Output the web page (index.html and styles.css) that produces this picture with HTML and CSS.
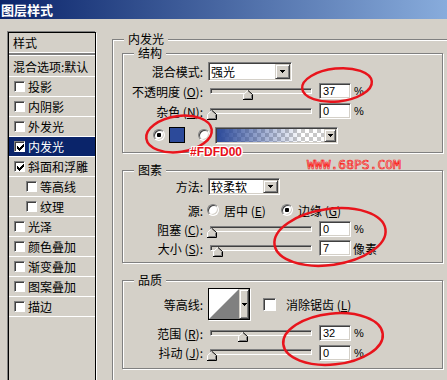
FILE: index.html
```html
<!DOCTYPE html>
<html>
<head>
<meta charset="utf-8">
<link rel="stylesheet" href="styles.css">
</head>
<body>
<div class="titlebar">图层样式</div>
<div class="main">
  <div class="list">
    <div class="list-head">样式</div>
    <div class="list-div"></div>
    <div class="item blend">混合选项:默认</div>
    <div class="item"><span class="cb"></span>投影</div>
    <div class="item"><span class="cb"></span>内阴影</div>
    <div class="item"><span class="cb"></span>外发光</div>
    <div class="item sel"><span class="cb"><svg width="7" height="7" viewBox="0 0 7 7"><path d="M0 2h1v3h-1z M1 3h1v3h-1z M2 4h1v3h-1z M3 3h1v3h-1z M4 2h1v3h-1z M5 1h1v3h-1z M6 0h1v3h-1z" fill="#000"/></svg></span>内发光</div>
    <div class="item"><span class="cb"><svg width="7" height="7" viewBox="0 0 7 7"><path d="M0 2h1v3h-1z M1 3h1v3h-1z M2 4h1v3h-1z M3 3h1v3h-1z M4 2h1v3h-1z M5 1h1v3h-1z M6 0h1v3h-1z" fill="#000"/></svg></span>斜面和浮雕</div>
    <div class="item sub"><span class="cb"></span>等高线</div>
    <div class="item sub"><span class="cb"></span>纹理</div>
    <div class="item"><span class="cb"></span>光泽</div>
    <div class="item"><span class="cb"></span>颜色叠加</div>
    <div class="item"><span class="cb"></span>渐变叠加</div>
    <div class="item"><span class="cb"></span>图案叠加</div>
    <div class="item"><span class="cb"></span>描边</div>
  </div>

  <div class="panel">
    <fieldset class="grp outer">
      <legend>内发光</legend>

      <fieldset class="grp inner g1">
        <legend>结构</legend>
        <div class="row r-blend">
          <span class="lbl">混合模式:</span>
          <div class="dd dd1"><span class="dd-text">强光</span><span class="dd-btn"><svg width="5" height="3" viewBox="0 0 5 3"><path d="M0 0h5v1h-5z M1 1h3v1h-3z M2 2h1v1h-1z" fill="#000"/></svg></span></div>
        </div>
        <div class="row">
          <span class="lbl">不透明度 (<u>O</u>):</span>
          <div class="slider"><div class="track"></div><svg class="thumb" style="left:36px" width="10" height="10" viewBox="0 0 10 10"><path d="M0.5 9.5V4.5L5 0.5L9.5 4.5V9.5Z" fill="#d4d0c8"/><path d="M0.5 9V4.5L4.8 0.6" stroke="#fff" fill="none"/><path d="M5 0.5L9.5 4.5V9.5H0" stroke="#000" fill="none"/><path d="M1.5 8.5H8.5V5" stroke="#808080" fill="none"/></svg></div>
          <div class="num">37</div><span class="unit">%</span>
        </div>
        <div class="row">
          <span class="lbl">杂色 (<u>N</u>):</span>
          <div class="slider"><div class="track"></div><svg class="thumb" style="left:0px" width="10" height="10" viewBox="0 0 10 10"><path d="M0.5 9.5V4.5L5 0.5L9.5 4.5V9.5Z" fill="#d4d0c8"/><path d="M0.5 9V4.5L4.8 0.6" stroke="#fff" fill="none"/><path d="M5 0.5L9.5 4.5V9.5H0" stroke="#000" fill="none"/><path d="M1.5 8.5H8.5V5" stroke="#808080" fill="none"/></svg></div>
          <div class="num">0</div><span class="unit">%</span>
        </div>
        <div class="row r-color">
          <span class="radio on"></span>
          <span class="swatch"></span>
          <span class="radio r2"></span>
          <div class="grad"><span class="grad-fill"></span><span class="dd-btn"><svg width="5" height="3" viewBox="0 0 5 3"><path d="M0 0h5v1h-5z M1 1h3v1h-3z M2 2h1v1h-1z" fill="#000"/></svg></span></div>
        </div>
      </fieldset>

      <fieldset class="grp inner g2">
        <legend>图素</legend>
        <div class="row r-method">
          <span class="lbl">方法:</span>
          <div class="dd dd2"><span class="dd-text">较柔软</span><span class="dd-btn"><svg width="5" height="3" viewBox="0 0 5 3"><path d="M0 0h5v1h-5z M1 1h3v1h-3z M2 2h1v1h-1z" fill="#000"/></svg></span></div>
        </div>
        <div class="row r-src">
          <span class="lbl">源:</span>
          <span class="opt"><span class="radio"></span><span class="opt-text">居中 (<u>E</u>)</span></span>
          <span class="opt"><span class="radio on"></span><span class="opt-text">边缘 (<u>G</u>)</span></span>
        </div>
        <div class="row r-choke">
          <span class="lbl">阻塞 (<u>C</u>):</span>
          <div class="slider"><div class="track"></div><svg class="thumb" style="left:0px" width="10" height="10" viewBox="0 0 10 10"><path d="M0.5 9.5V4.5L5 0.5L9.5 4.5V9.5Z" fill="#d4d0c8"/><path d="M0.5 9V4.5L4.8 0.6" stroke="#fff" fill="none"/><path d="M5 0.5L9.5 4.5V9.5H0" stroke="#000" fill="none"/><path d="M1.5 8.5H8.5V5" stroke="#808080" fill="none"/></svg></div>
          <div class="num">0</div><span class="unit">%</span>
        </div>
        <div class="row">
          <span class="lbl">大小 (<u>S</u>):</span>
          <div class="slider"><div class="track"></div><svg class="thumb" style="left:6px" width="10" height="10" viewBox="0 0 10 10"><path d="M0.5 9.5V4.5L5 0.5L9.5 4.5V9.5Z" fill="#d4d0c8"/><path d="M0.5 9V4.5L4.8 0.6" stroke="#fff" fill="none"/><path d="M5 0.5L9.5 4.5V9.5H0" stroke="#000" fill="none"/><path d="M1.5 8.5H8.5V5" stroke="#808080" fill="none"/></svg></div>
          <div class="num">7</div><span class="unit cjk">像素</span>
        </div>
      </fieldset>

      <fieldset class="grp inner g3">
        <legend>品质</legend>
        <div class="row r-contour">
          <span class="lbl">等高线:</span>
          <div class="contour"><svg class="contour-img" width="30" height="30" viewBox="0 0 30 30"><rect width="30" height="30" fill="#fff"/><path d="M0 30L30 0V30Z" fill="#808080"/></svg><span class="dd-btn"><svg width="5" height="3" viewBox="0 0 5 3"><path d="M0 0h5v1h-5z M1 1h3v1h-3z M2 2h1v1h-1z" fill="#000"/></svg></span></div>
          <span class="cb big"></span>
          <span class="opt-text">消除锯齿 (<u>L</u>)</span>
        </div>
        <div class="row r-range">
          <span class="lbl">范围 (<u>R</u>):</span>
          <div class="slider"><div class="track"></div><svg class="thumb" style="left:31px" width="10" height="10" viewBox="0 0 10 10"><path d="M0.5 9.5V4.5L5 0.5L9.5 4.5V9.5Z" fill="#d4d0c8"/><path d="M0.5 9V4.5L4.8 0.6" stroke="#fff" fill="none"/><path d="M5 0.5L9.5 4.5V9.5H0" stroke="#000" fill="none"/><path d="M1.5 8.5H8.5V5" stroke="#808080" fill="none"/></svg></div>
          <div class="num">32</div><span class="unit">%</span>
        </div>
        <div class="row r-jitter">
          <span class="lbl">抖动 (<u>J</u>):</span>
          <div class="slider"><div class="track"></div><svg class="thumb" style="left:0px" width="10" height="10" viewBox="0 0 10 10"><path d="M0.5 9.5V4.5L5 0.5L9.5 4.5V9.5Z" fill="#d4d0c8"/><path d="M0.5 9V4.5L4.8 0.6" stroke="#fff" fill="none"/><path d="M5 0.5L9.5 4.5V9.5H0" stroke="#000" fill="none"/><path d="M1.5 8.5H8.5V5" stroke="#808080" fill="none"/></svg></div>
          <div class="num">0</div><span class="unit">%</span>
        </div>
      </fieldset>
    </fieldset>
  </div>
</div>

<svg class="marks" width="447" height="380" viewBox="0 0 447 380">
  <ellipse cx="179" cy="134" rx="33" ry="18" transform="rotate(-8 179 134)"/>
  <ellipse cx="337" cy="85" rx="35" ry="16.5" transform="rotate(-6 337 85)"/>
  <ellipse cx="330" cy="237" rx="56" ry="28" transform="rotate(-8 330 237)"/>
  <ellipse cx="333" cy="339" rx="50" ry="25.5" transform="rotate(-6 333 339)"/>
</svg>
<div class="hex">#FDFD00</div>
<div class="wm">WWW.68PS.COM</div>
</body>
</html>
```

FILE: styles.css
```css
* { box-sizing: border-box; }
html, body { margin: 0; padding: 0; }
body {
  width: 447px;
  height: 380px;
  overflow: hidden;
  position: relative;
  background: #d4d0c8;
  font-family: "Noto Sans CJK SC", sans-serif;
  font-size: 12px;
  color: #000;
}
u { text-decoration: underline; }

.titlebar {
  height: 19px;
  line-height: 19px;
  padding-left: 1px;
  color: #fff;
  font-weight: bold;
  font-size: 13px;
  background: linear-gradient(to right, #0a246a, #88acdc);
}

.main {
  display: flex;
  align-items: flex-start;
  padding-top: 13px;
}

/* left style list */
.list {
  flex: none;
  margin-left: 8px;
  width: 88px;
  height: 360px;
  border: 1px solid #000;
  box-shadow: -1px -1px 0 #808080, 1px 1px 0 #fff;
}
.list-head {
  height: 19px;
  line-height: 19px;
  padding-left: 4px;
}
.list-div {
  height: 4px;
  border-top: 1px solid #fff;
  border-bottom: 1px solid #fff;
  background: #808080;
}
.item {
  display: flex;
  align-items: center;
  height: 20px;
  line-height: 19px;
  padding-left: 5px;
  border-bottom: 1px solid #fff;
  white-space: nowrap;
}
.item.blend { height: 21px; padding-left: 4px; }
.item.sub { padding-left: 17px; }
.item.sel { background: #0a246a; color: #fff; }

.cb {
  flex: none;
  display: flex;
  align-items: center;
  justify-content: center;
  width: 11px;
  height: 11px;
  margin-right: 3px;
  background: #fff;
  border: 1px solid;
  border-color: #808080 #fff #fff #808080;
  box-shadow: inset 1px 1px 0 #404040;
}
.cb svg { margin: 1px 0 0 1px; }
.cb.big { width: 13px; height: 13px; margin: 0 5px 0 13px; }

/* right panel */
.panel { flex: none; margin-left: 16px; }

fieldset.grp {
  margin: 0;
  padding: 0;
  min-width: 0;
  border: 1px solid #808080;
  box-shadow: inset 1px 1px 0 #fff, 1px 1px 0 #fff;
}
.grp > legend {
  margin-left: 11px;
  padding: 0 4px;
  line-height: 14px;
  font-size: 12px;
  background: #d4d0c8;
}
.outer {
  width: 360px;
  height: 400px;
  padding-left: 9px !important;
}
.outer > legend { margin-left: 2px; }
.inner { width: 321px; }
.g1 { padding-bottom: 7px !important; }
.g2 { margin-top: 10px !important; padding-bottom: 4px !important; }
.g3 { margin-top: 10px !important; padding-bottom: 6px !important; }

.row {
  display: flex;
  align-items: center;
  height: 20px;
  white-space: nowrap;
}
.r-blend { margin-top: 1px; }
.r-color { margin-top: 4px; padding-left: 30px; }
.r-method { height: 19px; }
.r-src { margin-top: 4px; }
.r-choke { height: 18px; }
.r-contour { height: 32px; margin-top: 1px; }
.r-range { margin-top: 3px; }
.r-jitter { height: 19px; }

.lbl {
  flex: none;
  width: 80px;
  margin-right: 4px;
  text-align: right;
}

/* dropdown */
.dd {
  display: flex;
  margin-left: 1px;
  padding: 1px;
  background: #fff;
  border: 1px solid;
  border-color: #808080 #fff #fff #808080;
  box-shadow: inset 1px 1px 0 #404040, inset -1px -1px 0 #d4d0c8;
}
.dd1 { width: 84px; height: 19px; }
.dd2 { width: 72px; height: 17px; }
.dd-text { flex: 1; padding-left: 1px; line-height: 15px; }
.dd2 .dd-text { line-height: 13px; }
.dd-btn {
  flex: none;
  display: flex;
  align-items: center;
  justify-content: center;
  width: 15px;
  background: #d4d0c8;
  border: 1px solid;
  border-color: #d4d0c8 #404040 #404040 #d4d0c8;
  box-shadow: inset 1px 1px 0 #fff, inset -1px -1px 0 #808080;
}

/* slider */
.slider {
  flex: none;
  position: relative;
  width: 108px;
  height: 12px;
  margin-top: 5px;
}
.track {
  margin-left: 3px;
  width: 102px;
  height: 6px;
  background: #d4d0c8;
  border: 1px solid;
  border-color: #808080 #fff #fff #808080;
  box-shadow: inset 1px 1px 0 #404040;
}
.thumb { position: absolute; top: 2px; }

.num {
  flex: none;
  width: 32px;
  height: 16px;
  margin-left: 4px;
  padding: 1px 0 0 3px;
  background: #fff;
  border: 1px solid;
  border-color: #808080 #fff #fff #808080;
  box-shadow: inset 1px 1px 0 #404040, inset -1px -1px 0 #d4d0c8;
  font-family: "Liberation Sans", Arial, sans-serif;
  font-size: 11px;
  line-height: 12px;
}
.unit {
  margin-left: 3px;
  font-family: "Liberation Sans", Arial, sans-serif;
  font-size: 11px;
}
.unit.cjk { font-family: "Noto Sans CJK SC", sans-serif; font-size: 12px; margin-left: 2px; }

/* radio */
.radio {
  flex: none;
  display: inline-block;
  width: 12px;
  height: 12px;
  border-radius: 50%;
  background: #fff;
  border: 1px solid;
  border-color: #808080 #fff #fff #808080;
  box-shadow: inset 1px 1px 0 #404040, inset -1px -1px 0 #d4d0c8;
}
.radio.on { background: radial-gradient(circle, #000 0 2px, #fff 2.5px); }

.swatch {
  flex: none;
  width: 16px;
  height: 16px;
  margin-left: 4px;
  background: #2c4a9a;
  border: 1px solid #000;
}
.radio.r2 { margin-left: 13px; }

.grad {
  flex: none;
  display: flex;
  width: 123px;
  height: 17px;
  margin-left: 5px;
  padding: 1px;
  border: 1px solid;
  border-color: #808080 #fff #fff #808080;
  box-shadow: inset 1px 1px 0 #404040, inset -1px -1px 0 #d4d0c8;
}
.grad-fill {
  flex: 1;
  background-image:
    linear-gradient(to right, #2c4a9a 0%, rgba(44, 74, 154, 0.55) 35%, rgba(44, 74, 154, 0) 80%),
    conic-gradient(#c8c8c8 0 25%, #fff 0 50%, #c8c8c8 0 75%, #fff 0);
  background-size: 100% 100%, 8px 8px;
}
.grad .dd-btn { width: 12px; }

.opt { display: flex; align-items: center; width: 74px; flex: none; }
.opt-text { margin-left: 5px; }

/* contour */
.contour {
  flex: none;
  display: flex;
  width: 42px;
  height: 32px;
  margin-left: 1px;
  border: 1px solid #000;
  box-shadow: 1px 1px 0 #fff;
  background: #fff;
}
.contour-img { flex: none; }
.contour .dd-btn { width: 10px; }

/* annotations over the screenshot */
.marks {
  position: absolute;
  left: 0;
  top: 0;
  pointer-events: none;
}
.marks ellipse {
  fill: none;
  stroke: #e8141c;
  stroke-width: 2.5;
}
.hex {
  position: absolute;
  left: 190px;
  top: 146px;
  font-family: "Liberation Sans", Arial, sans-serif;
  font-weight: bold;
  font-size: 12px;
  line-height: 12px;
  color: #e8101a;
  text-shadow: 1px 0 0 #fff, -1px 0 0 #fff, 0 1px 0 #fff, 0 -1px 0 #fff,
    1px 1px 0 #fff, -1px -1px 0 #fff, 1px -1px 0 #fff, -1px 1px 0 #fff;
}
.wm {
  position: absolute;
  left: 307px;
  top: 158px;
  font-family: "DejaVu Sans Mono", monospace;
  font-size: 13px;
  line-height: 14px;
  color: transparent;
  -webkit-text-stroke: 0.7px #ff1a1a;
}
```
